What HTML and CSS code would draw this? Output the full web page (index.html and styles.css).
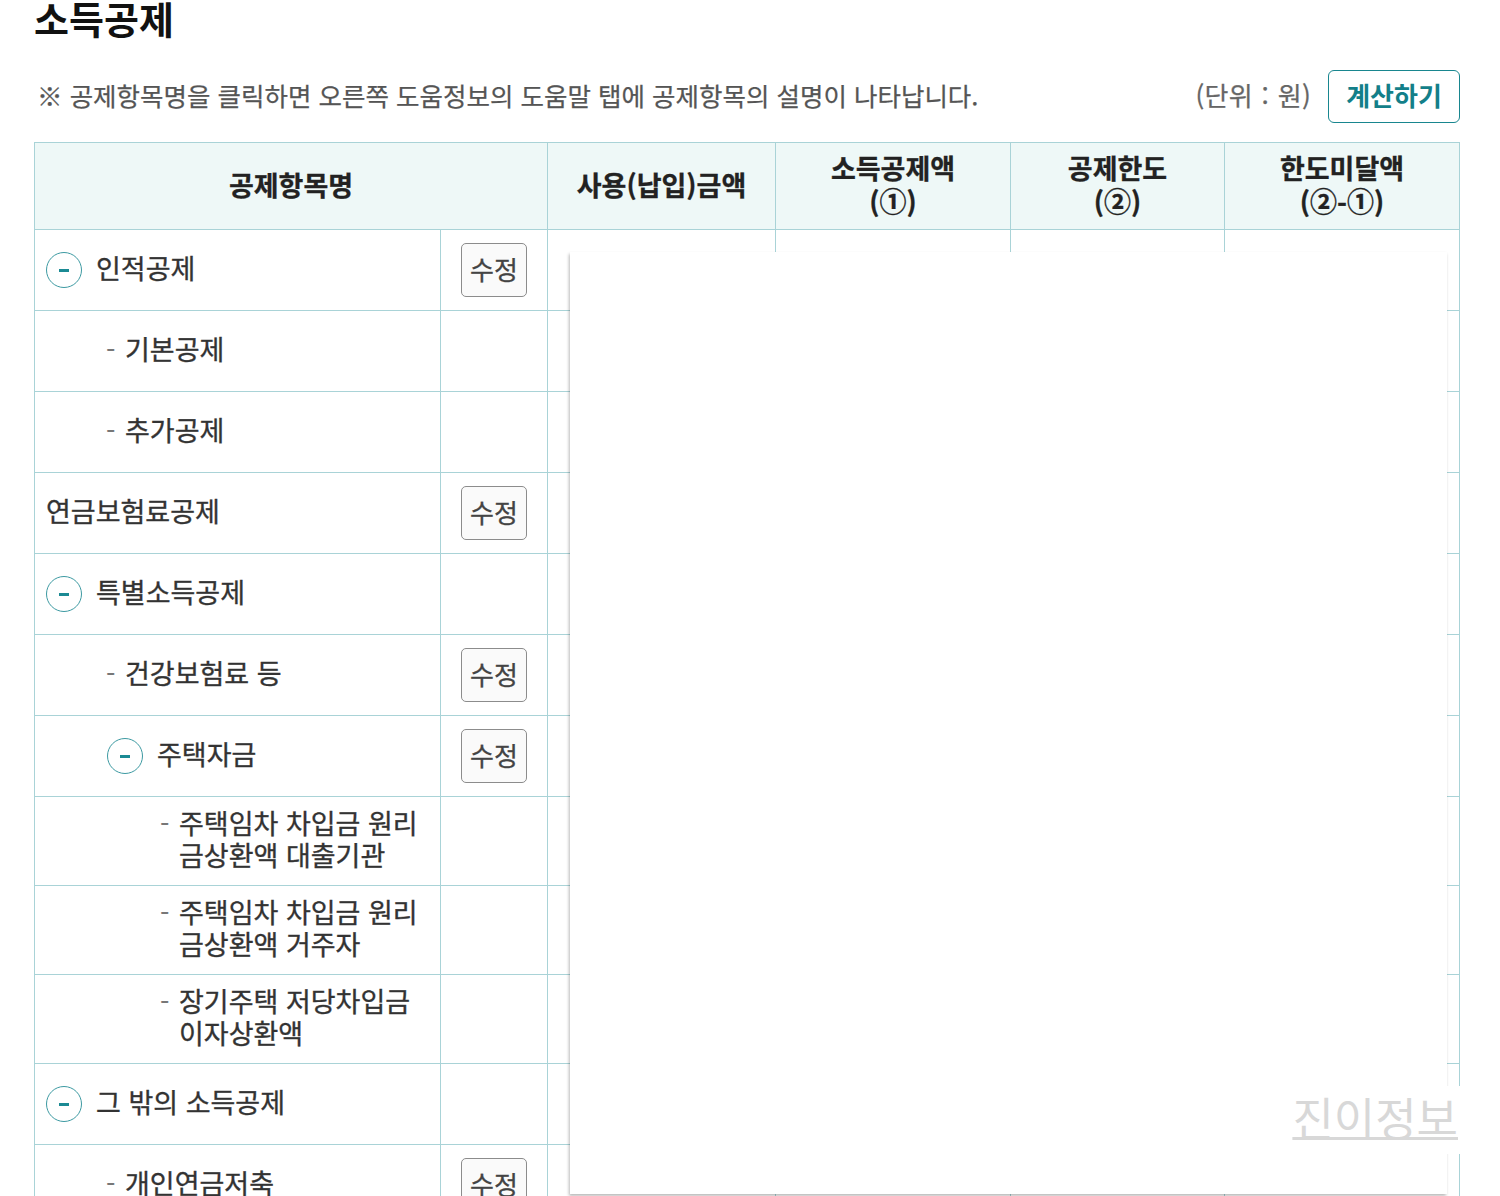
FILE: index.html
```html
<!DOCTYPE html>
<html lang="ko">
<head>
<meta charset="utf-8">
<title>소득공제</title>
<link rel="stylesheet" href="styles.css">
</head>
<body>
<div class="page">
  <h1 class="title">소득공제</h1>
  <div class="toolbar">
    <p class="note">※ 공제항목명을 클릭하면 오른쪽 도움정보의 도움말 탭에 공제항목의 설명이 나타납니다.</p>
    <span class="unit">(단위 : 원)</span>
    <button class="calc-btn" type="button">계산하기</button>
  </div>
  <table class="grid">
    <colgroup>
      <col class="c-name"><col class="c-edit"><col class="c-use"><col class="c-amt"><col class="c-lim"><col class="c-rest">
    </colgroup>
    <thead>
      <tr>
        <th colspan="2">공제항목명</th>
        <th>사용(납입)금액</th>
        <th><span class="hl">소득공제액</span><span class="hl">(①)</span></th>
        <th><span class="hl">공제한도</span><span class="hl">(②)</span></th>
        <th><span class="hl">한도미달액</span><span class="hl">(②-①)</span></th>
      </tr>
    </thead>
    <tbody>
      <tr>
        <td><div class="item"><span class="toggle"></span><span>인적공제</span></div></td>
        <td class="edit"><button class="edit-btn" type="button">수정</button></td>
        <td></td><td></td><td></td><td></td>
      </tr>
      <tr>
        <td><div class="item lv1"><span class="dash">-</span><span>기본공제</span></div></td>
        <td class="edit"></td>
        <td></td><td></td><td></td><td></td>
      </tr>
      <tr>
        <td><div class="item lv1"><span class="dash">-</span><span>추가공제</span></div></td>
        <td class="edit"></td>
        <td></td><td></td><td></td><td></td>
      </tr>
      <tr>
        <td><div class="item"><span>연금보험료공제</span></div></td>
        <td class="edit"><button class="edit-btn" type="button">수정</button></td>
        <td></td><td></td><td></td><td></td>
      </tr>
      <tr>
        <td><div class="item"><span class="toggle"></span><span>특별소득공제</span></div></td>
        <td class="edit"></td>
        <td></td><td></td><td></td><td></td>
      </tr>
      <tr>
        <td><div class="item lv1"><span class="dash">-</span><span>건강보험료 등</span></div></td>
        <td class="edit"><button class="edit-btn" type="button">수정</button></td>
        <td></td><td></td><td></td><td></td>
      </tr>
      <tr>
        <td><div class="item lv1t"><span class="toggle"></span><span>주택자금</span></div></td>
        <td class="edit"><button class="edit-btn" type="button">수정</button></td>
        <td></td><td></td><td></td><td></td>
      </tr>
      <tr>
        <td><div class="item lv2"><span class="dash">-</span><span>주택임차 차입금 원리금상환액 대출기관</span></div></td>
        <td class="edit"></td>
        <td></td><td></td><td></td><td></td>
      </tr>
      <tr>
        <td><div class="item lv2"><span class="dash">-</span><span>주택임차 차입금 원리금상환액 거주자</span></div></td>
        <td class="edit"></td>
        <td></td><td></td><td></td><td></td>
      </tr>
      <tr>
        <td><div class="item lv2"><span class="dash">-</span><span>장기주택 저당차입금 이자상환액</span></div></td>
        <td class="edit"></td>
        <td></td><td></td><td></td><td></td>
      </tr>
      <tr>
        <td><div class="item"><span class="toggle"></span><span>그 밖의 소득공제</span></div></td>
        <td class="edit"></td>
        <td></td><td></td><td></td><td></td>
      </tr>
      <tr>
        <td><div class="item lv1"><span class="dash">-</span><span>개인연금저축</span></div></td>
        <td class="edit"><button class="edit-btn" type="button">수정</button></td>
        <td></td><td></td><td></td><td></td>
      </tr>
      <tr>
        <td><div class="item lv1"><span class="dash">-</span><span>주택마련저축</span></div></td>
        <td class="edit"><button class="edit-btn" type="button">수정</button></td>
        <td></td><td></td><td></td><td></td>
      </tr>
    </tbody>
  </table>
</div>
<div class="overlay"></div>
<div class="watermark">진이정보</div>
</body>
</html>
```

FILE: styles.css
```css
html, body {
  margin: 0;
  padding: 0;
  background: #ffffff;
}

body {
  font-family: "Noto Sans CJK KR", "Noto Sans", sans-serif;
  color: #333333;
  position: relative;
}

.page {
  padding: 0 40px 0 34px;
  width: 1426px;
}

.title {
  margin: -3px 0 0 0;
  font-size: 38px;
  line-height: 42px;
  font-weight: 700;
  color: #111111;
}

.toolbar {
  display: flex;
  align-items: center;
  margin-top: 31px;
  height: 53px;
}

.note {
  flex: 1;
  margin: 0 0 5px 0;
  padding-left: 3px;
  font-size: 25.5px;
  color: #555555;
  -webkit-text-stroke: 0.25px #555555;
}

.unit {
  font-size: 26px;
  color: #666666;
  margin: 0 17px 5px 0;
  letter-spacing: 0.3px;
  word-spacing: 1px;
  -webkit-text-stroke: 0.25px #666666;
}

.calc-btn {
  width: 132px;
  height: 53px;
  border: 1px solid #18868f;
  border-radius: 6px;
  background: #ffffff;
  color: #137f89;
  font-family: inherit;
  font-size: 26px;
  font-weight: 700;
  padding: 0 0 4px 0;
}

.grid {
  margin-top: 19px;
  width: 1426px;
  border-collapse: collapse;
  table-layout: fixed;
}

.c-name { width: 406px; }
.c-edit { width: 107px; }
.c-use { width: 228px; }
.c-amt { width: 235px; }
.c-lim { width: 214px; }
.c-rest { width: 235px; }

.grid th,
.grid td {
  border: 1px solid #a9d3d7;
}

.grid th {
  background: #eef8f7;
  height: 66px;
  padding: 8px 0 12px;
  font-size: 27px;
  line-height: 33px;
  font-weight: 700;
  color: #222222;
  -webkit-text-stroke: 0.3px #222222;
}

.hl {
  display: block;
  height: 33px;
}

.grid td {
  height: 56px;
  padding: 10px 11px 14px;
  font-size: 27px;
  line-height: 32px;
  color: #333333;
  vertical-align: middle;
  -webkit-text-stroke: 0.35px #333333;
}

.grid td.edit {
  padding: 12px 0;
  text-align: center;
}

.item {
  display: flex;
  align-items: center;
}

.item.lv1 { padding-left: 60px; }
.item.lv1t { padding-left: 61px; }
.item.lv2 { padding-left: 114px; align-items: flex-start; }

.toggle {
  flex-shrink: 0;
  box-sizing: border-box;
  width: 36px;
  height: 36px;
  border: 1.5px solid #3d9aa2;
  border-radius: 50%;
  margin: 3px 14px 0 0;
  position: relative;
  -webkit-text-stroke: 0;
}

.toggle::after {
  content: "";
  position: absolute;
  left: 12px;
  top: 16px;
  width: 10px;
  height: 3px;
  background: #1b8a94;
}

.dash {
  flex-shrink: 0;
  width: 19px;
  color: #777777;
  -webkit-text-stroke: 0;
}

.edit-btn {
  width: 66px;
  height: 54px;
  border: 1px solid #8c8c8c;
  border-radius: 5px;
  background: #fafafa;
  color: #444444;
  font-family: inherit;
  font-size: 26px;
  padding: 0 0 4px 0;
  vertical-align: middle;
  -webkit-text-stroke: 0.3px #444444;
}

.overlay {
  position: absolute;
  left: 570px;
  top: 252px;
  width: 877px;
  height: 942px;
  background: #ffffff;
  box-shadow: -1px 2px 3px rgba(0, 0, 0, 0.28);
}

.watermark {
  position: absolute;
  left: 1282px;
  top: 1086px;
  width: 176px;
  height: 68px;
  padding-right: 4px;
  background: #ffffff;
  font-size: 45px;
  line-height: 62px;
  color: #d8d8d8;
  text-align: right;
  text-decoration: underline;
  text-decoration-thickness: 3px;
  text-underline-offset: 1px;
}
```
